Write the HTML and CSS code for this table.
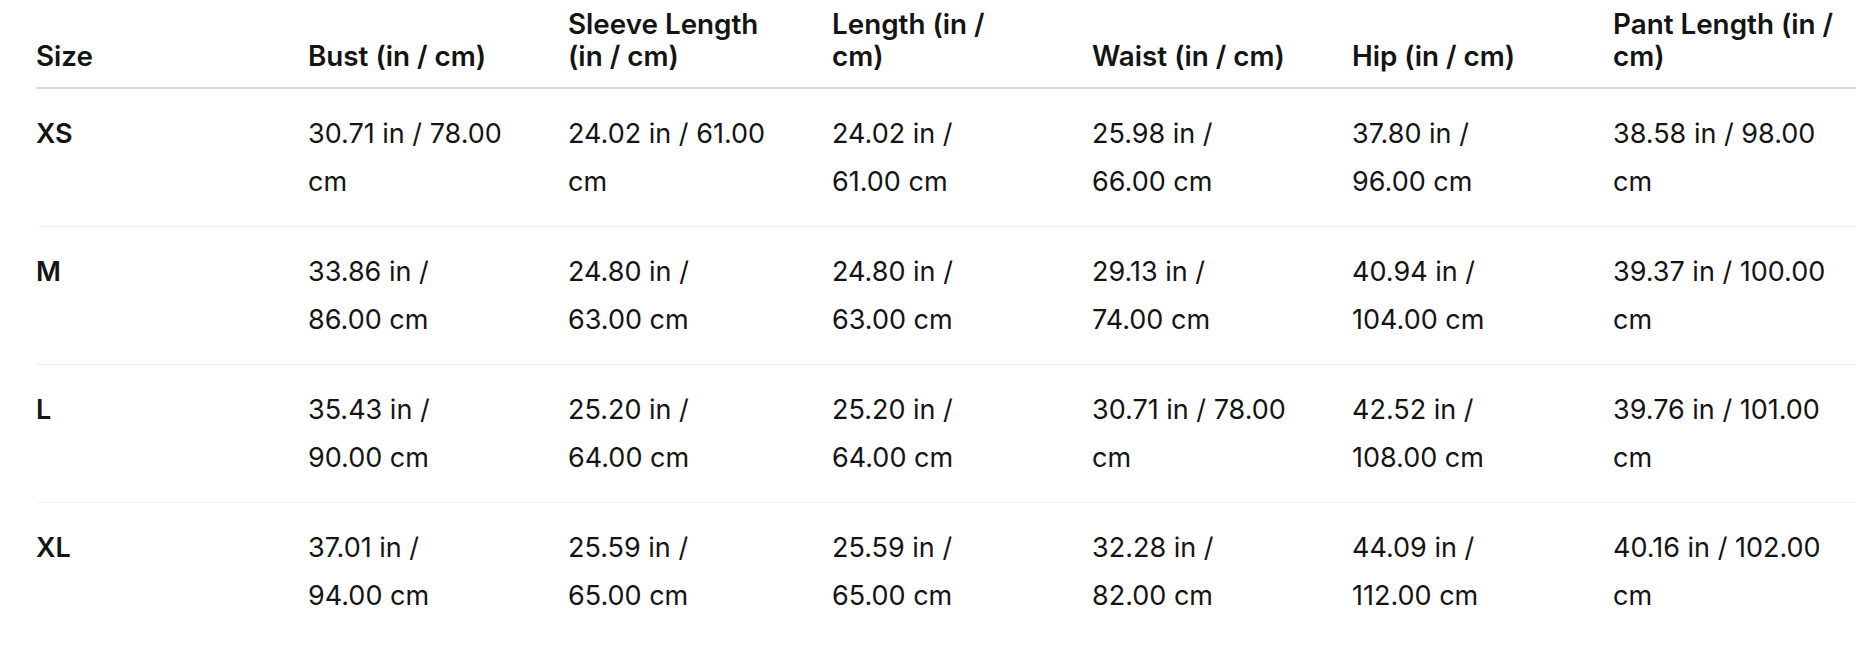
FILE: index.html
```html
<!DOCTYPE html>
<html lang="en">
<head>
<meta charset="utf-8">
<title>Size Chart</title>
<link rel="stylesheet" href="styles.css">
</head>
<body>
<div class="wrap">
  <table class="size-table">
    <colgroup>
      <col class="c-size">
      <col class="c-bust">
      <col class="c-sleeve">
      <col class="c-length">
      <col class="c-waist">
      <col class="c-hip">
      <col class="c-pant">
    </colgroup>
    <thead>
      <tr>
        <th>Size</th>
        <th>Bust (in / cm)</th>
        <th>Sleeve Length<br>(in / cm)</th>
        <th>Length (in /<br>cm)</th>
        <th>Waist (in / cm)</th>
        <th>Hip (in / cm)</th>
        <th>Pant Length (in /<br>cm)</th>
      </tr>
    </thead>
    <tbody>
      <tr>
        <td class="size">XS</td>
        <td>30.71 in / 78.00<br>cm</td>
        <td>24.02 in / 61.00<br>cm</td>
        <td>24.02 in /<br>61.00 cm</td>
        <td>25.98 in /<br>66.00 cm</td>
        <td>37.80 in /<br>96.00 cm</td>
        <td>38.58 in / 98.00<br>cm</td>
      </tr>
      <tr>
        <td class="size">M</td>
        <td>33.86 in /<br>86.00 cm</td>
        <td>24.80 in /<br>63.00 cm</td>
        <td>24.80 in /<br>63.00 cm</td>
        <td>29.13 in /<br>74.00 cm</td>
        <td>40.94 in /<br>104.00 cm</td>
        <td>39.37 in / 100.00<br>cm</td>
      </tr>
      <tr>
        <td class="size">L</td>
        <td>35.43 in /<br>90.00 cm</td>
        <td>25.20 in /<br>64.00 cm</td>
        <td>25.20 in /<br>64.00 cm</td>
        <td>30.71 in / 78.00<br>cm</td>
        <td>42.52 in /<br>108.00 cm</td>
        <td>39.76 in / 101.00<br>cm</td>
      </tr>
      <tr>
        <td class="size">XL</td>
        <td>37.01 in /<br>94.00 cm</td>
        <td>25.59 in /<br>65.00 cm</td>
        <td>25.59 in /<br>65.00 cm</td>
        <td>32.28 in /<br>82.00 cm</td>
        <td>44.09 in /<br>112.00 cm</td>
        <td>40.16 in / 102.00<br>cm</td>
      </tr>
    </tbody>
  </table>
</div>
</body>
</html>
```

FILE: styles.css
```css
html, body {
  margin: 0;
  padding: 0;
  background: #ffffff;
}

body {
  font-family: Inter, "Noto Sans", "Liberation Sans", sans-serif;
  color: #141414;
}

.wrap {
  padding: 8px 20px 0 36px;
}

.size-table {
  width: 1820px;
  table-layout: fixed;
  border-collapse: collapse;
  border-spacing: 0;
}

.c-size { width: 272px; }
.c-bust { width: 260px; }
.c-sleeve { width: 264px; }
.c-length { width: 260px; }
.c-waist { width: 260px; }
.c-hip { width: 261px; }
.c-pant { width: 243px; }

.size-table th {
  text-align: left;
  vertical-align: bottom;
  font-weight: 600;
  font-size: 27.8px;
  line-height: 32px;
  padding: 0 4px 15px 0;
  white-space: nowrap;
  border-bottom: 2px solid #d9d9d9;
}

.size-table td {
  text-align: left;
  vertical-align: top;
  font-weight: 400;
  font-size: 27px;
  line-height: 48px;
  padding: 21px 4px 20px 0;
  white-space: nowrap;
  border-bottom: 1px solid #f1f1f1;
}

.size-table tbody tr:last-child td {
  border-bottom: none;
}

.size-table td.size {
  font-weight: 600;
}
```
